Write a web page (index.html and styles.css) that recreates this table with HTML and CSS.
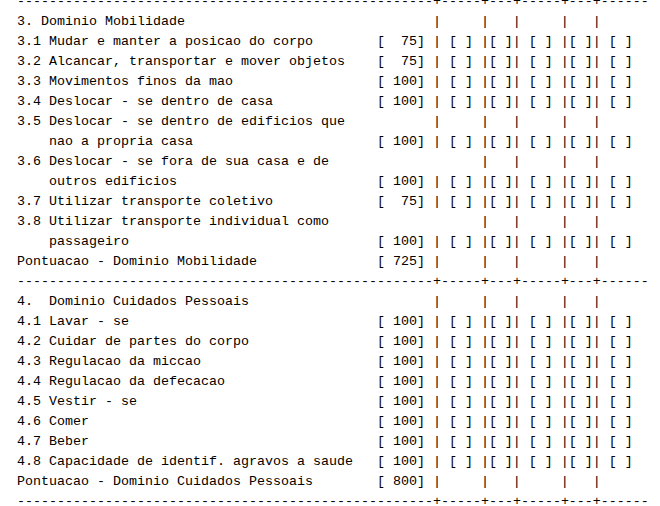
FILE: index.html
```html
<!DOCTYPE html>
<html>
<head>
<meta charset="utf-8">
<link rel="stylesheet" href="styles.css">
</head>
<body>
<div class="report">
<div class="r">----------------------------------------------------+-----+---+-----+---+------</div>
<div class="r"><span class="l">3. Dominio Mobilidade</span><span class="s"></span>|     |   |     |   |</div>
<div class="r"><span class="l">3.1 Mudar e manter a posicao do corpo</span><span class="s">[  75]</span>| [ ] |[ ]| [ ] |[ ]| [ ]</div>
<div class="r"><span class="l">3.2 Alcancar, transportar e mover objetos</span><span class="s">[  75]</span>| [ ] |[ ]| [ ] |[ ]| [ ]</div>
<div class="r"><span class="l">3.3 Movimentos finos da mao</span><span class="s">[ 100]</span>| [ ] |[ ]| [ ] |[ ]| [ ]</div>
<div class="r"><span class="l">3.4 Deslocar - se dentro de casa</span><span class="s">[ 100]</span>| [ ] |[ ]| [ ] |[ ]| [ ]</div>
<div class="r"><span class="l">3.5 Deslocar - se dentro de edificios que</span><span class="s"></span>|     |   |     |   |</div>
<div class="r"><span class="l">    nao a propria casa</span><span class="s">[ 100]</span>| [ ] |[ ]| [ ] |[ ]| [ ]</div>
<div class="r"><span class="l">3.6 Deslocar - se fora de sua casa e de</span><span class="s"></span>      |   |     |   |</div>
<div class="r"><span class="l">    outros edificios</span><span class="s">[ 100]</span>| [ ] |[ ]| [ ] |[ ]| [ ]</div>
<div class="r"><span class="l">3.7 Utilizar transporte coletivo</span><span class="s">[  75]</span>| [ ] |[ ]| [ ] |[ ]| [ ]</div>
<div class="r"><span class="l">3.8 Utilizar transporte individual como</span><span class="s"></span>      |   |     |   |</div>
<div class="r"><span class="l">    passageiro</span><span class="s">[ 100]</span>| [ ] |[ ]| [ ] |[ ]| [ ]</div>
<div class="r"><span class="l">Pontuacao - Dominio Mobilidade</span><span class="s">[ 725]</span>|     |   |     |   |</div>
<div class="r">----------------------------------------------------+-----+---+-----+---+------</div>
<div class="r"><span class="l">4.  Dominio Cuidados Pessoais</span><span class="s"></span>|     |   |     |   |</div>
<div class="r"><span class="l">4.1 Lavar - se</span><span class="s">[ 100]</span>| [ ] |[ ]| [ ] |[ ]| [ ]</div>
<div class="r"><span class="l">4.2 Cuidar de partes do corpo</span><span class="s">[ 100]</span>| [ ] |[ ]| [ ] |[ ]| [ ]</div>
<div class="r"><span class="l">4.3 Regulacao da miccao</span><span class="s">[ 100]</span>| [ ] |[ ]| [ ] |[ ]| [ ]</div>
<div class="r"><span class="l">4.4 Regulacao da defecacao</span><span class="s">[ 100]</span>| [ ] |[ ]| [ ] |[ ]| [ ]</div>
<div class="r"><span class="l">4.5 Vestir - se</span><span class="s">[ 100]</span>| [ ] |[ ]| [ ] |[ ]| [ ]</div>
<div class="r"><span class="l">4.6 Comer</span><span class="s">[ 100]</span>| [ ] |[ ]| [ ] |[ ]| [ ]</div>
<div class="r"><span class="l">4.7 Beber</span><span class="s">[ 100]</span>| [ ] |[ ]| [ ] |[ ]| [ ]</div>
<div class="r"><span class="l">4.8 Capacidade de identif. agravos a saude</span><span class="s">[ 100]</span>| [ ] |[ ]| [ ] |[ ]| [ ]</div>
<div class="r"><span class="l">Pontuacao - Dominio Cuidados Pessoais</span><span class="s">[ 800]</span>|     |   |     |   |</div>
<div class="r">----------------------------------------------------+-----+---+-----+---+------</div>
</div>
</body>
</html>
```

FILE: styles.css
```css
html, body {
  margin: 0;
  padding: 0;
  background: #ffffff;
}

.report {
  margin-top: -8px;
  padding-left: 17px;
  font-family: "Liberation Mono", "Courier New", monospace;
  font-size: 13.333px;
  line-height: 20px;
  color: #000000;
}

.r {
  height: 20px;
  white-space: pre;
}

.l {
  display: inline-block;
  width: 45ch;
}

.s {
  display: inline-block;
  width: 7ch;
}
```
